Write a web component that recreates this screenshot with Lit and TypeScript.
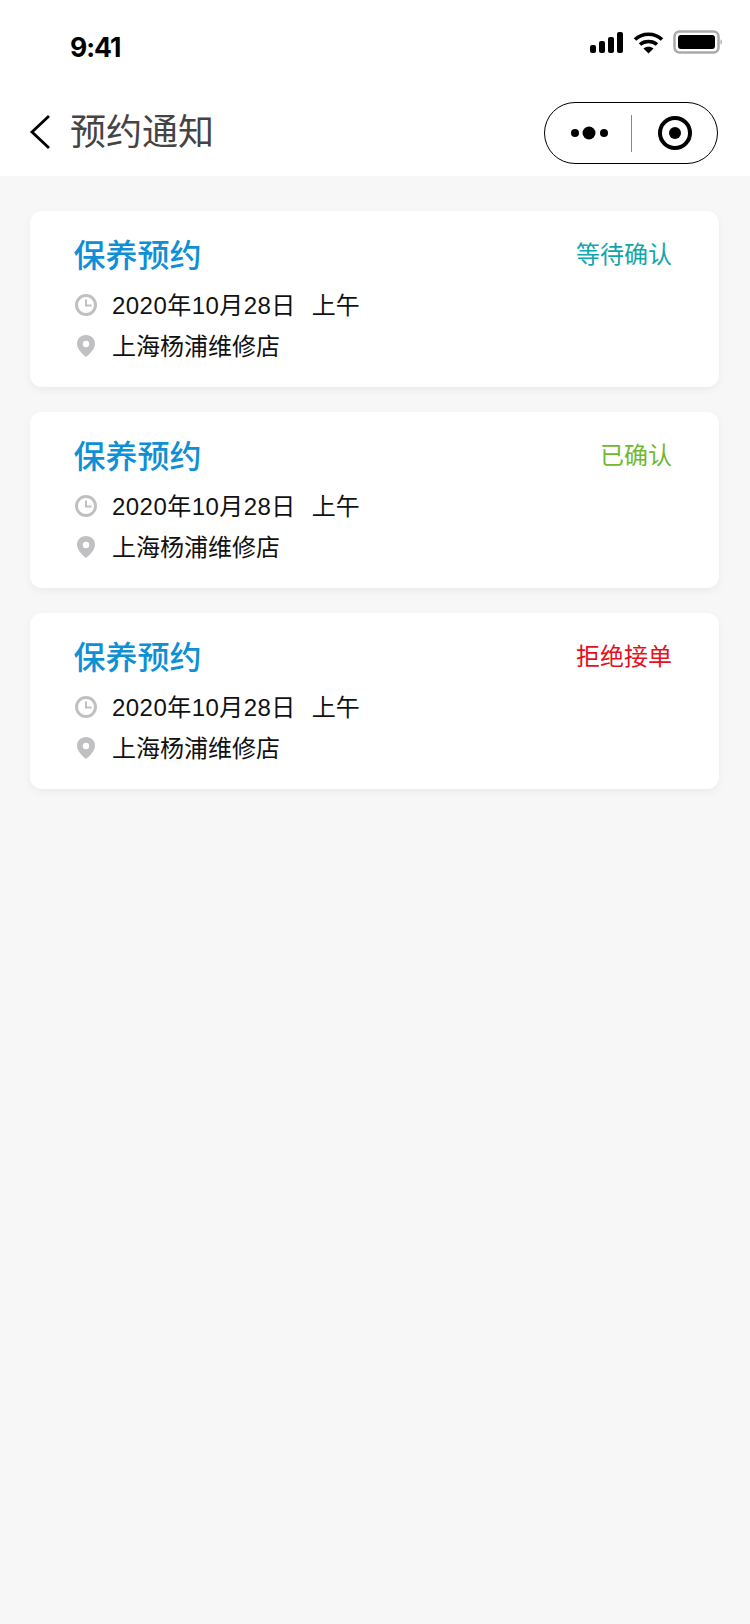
import { LitElement, html, css, svg } from "lit";
import { customElement } from "lit/decorators.js";

const items = [
  { status: "等待确认", cls: "wait" },
  { status: "已确认", cls: "ok" },
  { status: "拒绝接单", cls: "no" },
];

@customElement("app-root")
export class AppRoot extends LitElement {
  static styles = css`
    :host { display: block; width: 750px; height: 1624px; background: #f7f7f7; font-family: "Liberation Sans", "Noto Sans CJK SC", sans-serif; overflow: hidden; }
    .top { background: #fff; height: 176px; display: flex; flex-direction: column; }
    .status { height: 88px; display: flex; align-items: center; justify-content: space-between; padding: 5px 27px 0 70px; box-sizing: border-box; }
    .time { font: 700 26.5px/34px "Inter", "Liberation Sans", sans-serif; color: #000; letter-spacing: -1px; margin-top: 1px; }
    .sicons { display: flex; align-items: center; gap: 9px; margin-top: -9px; }
    .nav { height: 88px; box-sizing: border-box; display: flex; align-items: center; padding: 6px 30px 0 29px; }
    .back { width: 22px; height: 36px; margin-right: 19px; flex: none; margin-top: -7px; }
    .title { font-size: 36px; line-height: 44px; color: #444; flex: 1; margin-top: -4px; font-weight: 400; }
    .capsule { width: 174px; height: 62px; box-sizing: border-box; border: 1.5px solid #000; border-radius: 31px; display: flex; align-items: center; margin: -4px 2px 0 0; }
    .cap-l, .cap-r { display: flex; align-items: center; justify-content: center; }
    .cap-l { flex: none; width: 86px; box-sizing: border-box; padding-left: 3px; }
    .cap-r { flex: 1; }
    .sep { width: 1px; height: 37px; background: #888; }
    .list { display: flex; flex-direction: column; gap: 25px; padding: 35px 31px 0 30px; }
    .card { background: #fff; border-radius: 12px; height: 176px; box-sizing: border-box; padding: 23px 47px 0 44px; box-shadow: 0 3px 8px rgba(0,0,0,0.05); }
    .head { display: flex; justify-content: space-between; align-items: center; height: 44px; }
    .name { font-size: 32px; line-height: 44px; color: #0e8fd6; font-weight: 500; margin-left: -0.5px; }
    .st { font-size: 24px; line-height: 34px; margin-top: -2px; }
    .wait { color: #12a5ab; }
    .ok { color: #6fb92c; }
    .no { color: #e60f20; }
    .row { display: flex; align-items: center; height: 41px; font-size: 24px; color: #111; }
    .row svg { width: 22px; height: 24px; flex: none; margin: 2px 15px 0 1px; }
    .row.first { margin-top: 5px; }
    .date { letter-spacing: 0.45px; }
    .gap { margin-left: 16px; }
  `;

  render() {
    return html`
      <div class="top">
        <div class="status">
          <span class="time">9:41</span>
          <div class="sicons">
            <svg width="34" height="22" viewBox="0 0 34 22"><g fill="#000"><rect x="0" y="14" width="6" height="8" rx="2"/><rect x="9" y="10" width="6" height="12" rx="2"/><rect x="18" y="6" width="6" height="16" rx="2"/><rect x="27" y="1" width="6" height="21" rx="2"/></g></svg>
            <svg width="31" height="23" viewBox="0 0 31 23"><g fill="none" stroke="#000" stroke-width="3.6"><path d="M2 8.5C9.500 1.500 21.500 1.500 29 8.500"/><path d="M7 13.500C11.500 9.500 19.500 9.500 24 13.500"/></g><path d="M10.500 17.500C13 15.300 18 15.300 20.500 17.500L15.500 22.500Z" fill="#000"/></svg>
            <svg width="50" height="24" viewBox="0 0 50 24"><rect x="1.500" y="1.500" width="44" height="21" rx="5" fill="none" stroke="#aaa" stroke-width="2.500"/><rect x="5" y="5" width="37" height="14" rx="3" fill="#000"/><path d="M47.500 9.500C49.500 10 49.500 14 47.500 14.500Z" fill="#aaa"/></svg>
          </div>
        </div>
        <div class="nav">
          <svg class="back" viewBox="0 0 22 36"><path d="M20 2L3 18L20 34" fill="none" stroke="#000" stroke-width="2.800"/></svg>
          <div class="title">预约通知</div>
          <div class="capsule">
            <div class="cap-l"><svg width="38" height="14" viewBox="0 0 38 14"><g fill="#000"><circle cx="4" cy="7" r="4"/><circle cx="18" cy="7" r="6.500"/><circle cx="33" cy="7" r="4"/></g></svg></div>
            <div class="sep"></div>
            <div class="cap-r"><svg width="34" height="34" viewBox="0 0 34 34"><circle cx="17" cy="17" r="15" fill="none" stroke="#000" stroke-width="4"/><circle cx="17" cy="17" r="6" fill="#000"/></svg></div>
          </div>
        </div>
      </div>
      <div class="list">
        ${items.map((i) => html`
          <div class="card">
            <div class="head"><span class="name">保养预约</span><span class="st ${i.cls}">${i.status}</span></div>
            <div class="row first">
              <svg viewBox="0 0 22 24"><circle cx="11" cy="12" r="9.500" fill="none" stroke="#c0c0c2" stroke-width="3"/><path d="M11 6.500V12.500H16.500" fill="none" stroke="#c0c0c2" stroke-width="2"/></svg>
              <span class="date">2020年10月28日</span><span class="gap">上午</span>
            </div>
            <div class="row">
              <svg viewBox="0 0 22 24">${svg`<path fill-rule="evenodd" d="M11 1C5.800 1 2 4.900 2 9.800C2 15.500 8 20.500 11 23C14 20.500 20 15.500 20 9.800C20 4.900 16.200 1 11 1ZM11 6.800A3.200 3.200 0 1 1 11 13.200A3.200 3.200 0 1 1 11 6.800Z" fill="#c0c0c2"/>`}</svg>
              <span>上海杨浦维修店</span>
            </div>
          </div>
        `)}
      </div>
    `;
  }
}
